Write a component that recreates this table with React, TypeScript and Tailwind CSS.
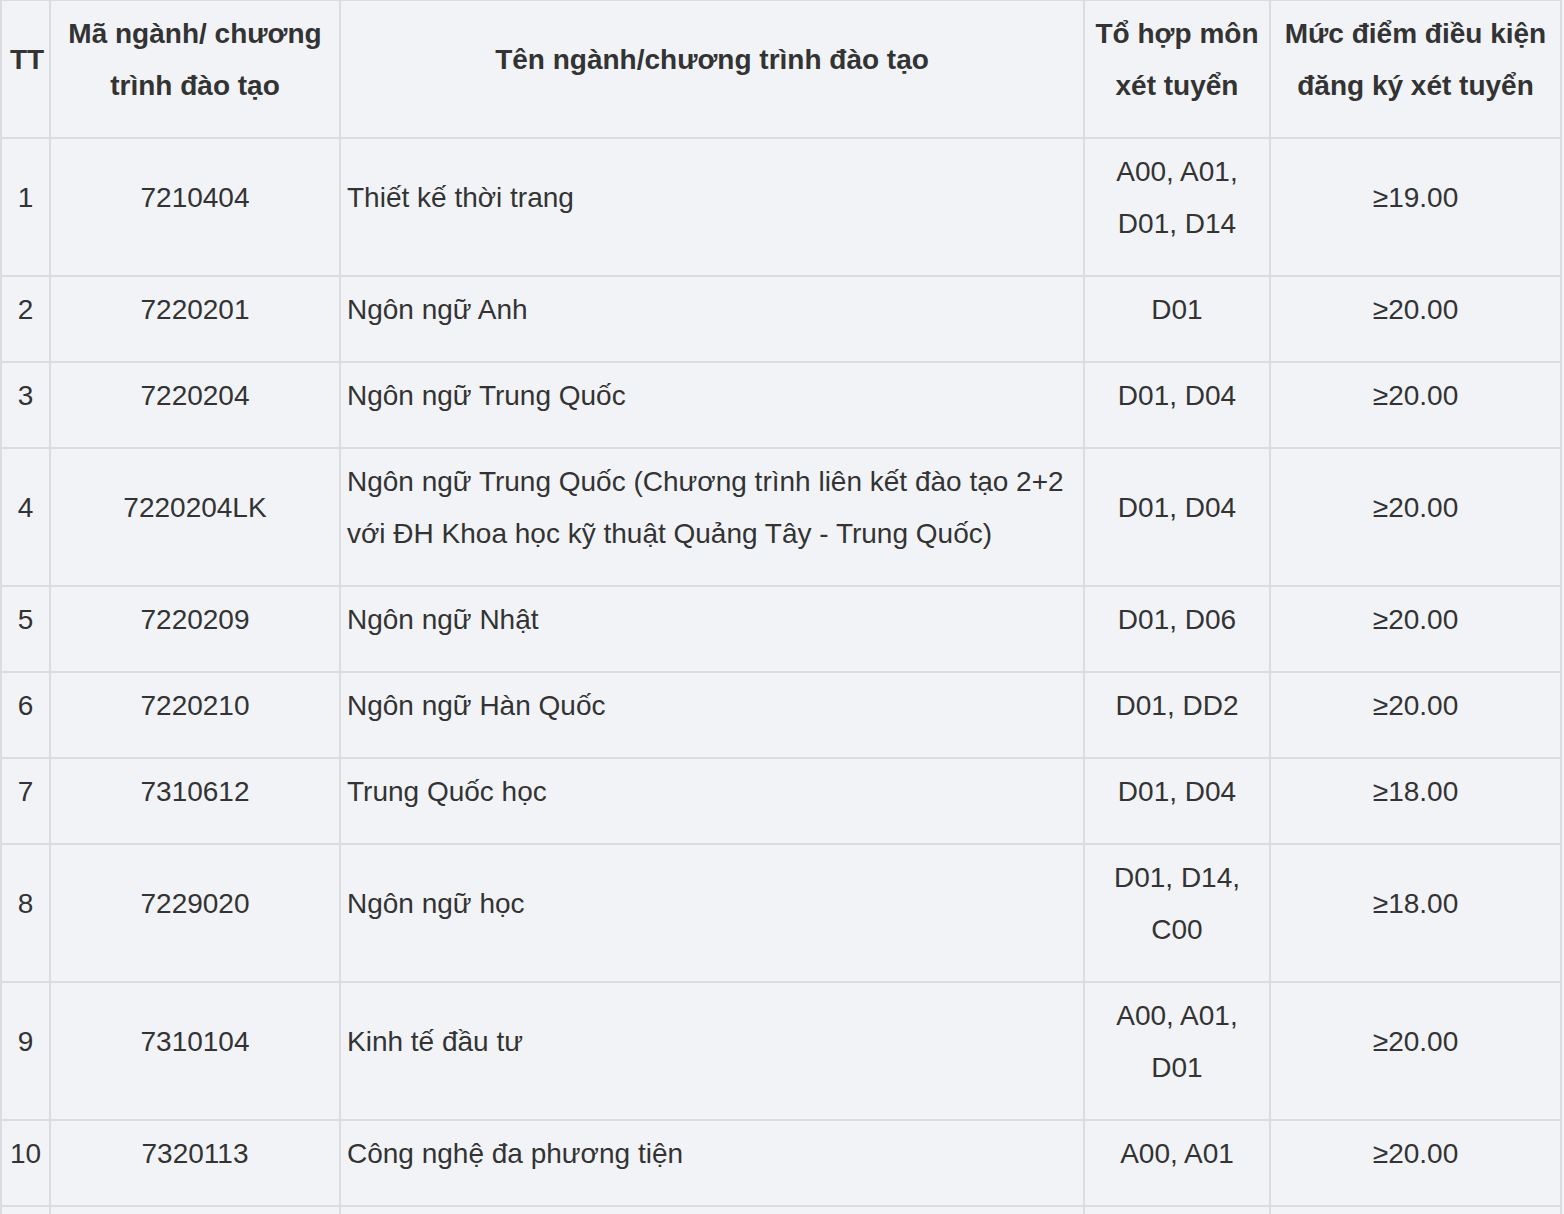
const rows: [string, string, string[], string[], string][] = [
	["1", "7210404", ["Thiết kế thời trang"], ["A00, A01,", "D01, D14"], "≥19.00"],
	["2", "7220201", ["Ngôn ngữ Anh"], ["D01"], "≥20.00"],
	["3", "7220204", ["Ngôn ngữ Trung Quốc"], ["D01, D04"], "≥20.00"],
	[
		"4",
		"7220204LK",
		[
			"Ngôn ngữ Trung Quốc (Chương trình liên kết đào tạo 2+2",
			"với ĐH Khoa học kỹ thuật Quảng Tây - Trung Quốc)",
		],
		["D01, D04"],
		"≥20.00",
	],
	["5", "7220209", ["Ngôn ngữ Nhật"], ["D01, D06"], "≥20.00"],
	["6", "7220210", ["Ngôn ngữ Hàn Quốc"], ["D01, DD2"], "≥20.00"],
	["7", "7310612", ["Trung Quốc học"], ["D01, D04"], "≥18.00"],
	["8", "7229020", ["Ngôn ngữ học"], ["D01, D14,", "C00"], "≥18.00"],
	["9", "7310104", ["Kinh tế đầu tư"], ["A00, A01,", "D01"], "≥20.00"],
	["10", "7320113", ["Công nghệ đa phương tiện"], ["A00, A01"], "≥20.00"],
];

const cell = "border-2 border-[#dcdce0] pt-[7px] pb-[25px] px-2 align-middle leading-[52px]";

const Lines = ({ lines }: { lines: string[] }) => (
	<>
		{lines.map((l, i) => (
			<div key={i}>{l}</div>
		))}
	</>
);

const App = () => {
	return (
		<div
			className="h-[1214px] bg-[#f2f3f7] text-[#333333] overflow-hidden"
			style={{ fontFamily: '"Liberation Sans", Arial, sans-serif' }}
		>
			<table className="table-fixed border-collapse w-[1560px] text-[28px] -mt-px">
				<colgroup>
					<col className="w-[49px]" />
					<col className="w-[290px]" />
					<col className="w-[744px]" />
					<col className="w-[186px]" />
					<col className="w-[291px]" />
				</colgroup>
				<thead>
					<tr className="font-bold">
						<th className={`${cell} px-0 text-center`}>TT</th>
						<th className={`${cell} px-0 text-center`}>
							<Lines lines={["Mã ngành/ chương", "trình đào tạo"]} />
						</th>
						<th className={`${cell} text-center`}>Tên ngành/chương trình đào tạo</th>
						<th className={`${cell} px-0 text-center`}>
							<Lines lines={["Tổ hợp môn", "xét tuyển"]} />
						</th>
						<th className={`${cell} px-0 text-center`}>
							<Lines lines={["Mức điểm điều kiện", "đăng ký xét tuyển"]} />
						</th>
					</tr>
				</thead>
				<tbody>
					{rows.map(([tt, code, name, combo, score]) => (
						<tr key={tt}>
							<td className={`${cell} px-0 text-center`}>{tt}</td>
							<td className={`${cell} text-center`}>{code}</td>
							<td className={`${cell} pl-[6px] text-left whitespace-nowrap`}>
								<Lines lines={name} />
							</td>
							<td className={`${cell} px-0 text-center`}>
								<Lines lines={combo} />
							</td>
							<td className={`${cell} text-center`}>{score}</td>
						</tr>
					))}
					<tr>
						<td className={`${cell} h-[86px]`}></td>
						<td className={cell}></td>
						<td className={cell}></td>
						<td className={cell}></td>
						<td className={cell}></td>
					</tr>
				</tbody>
			</table>
		</div>
	);
};

export default App;
